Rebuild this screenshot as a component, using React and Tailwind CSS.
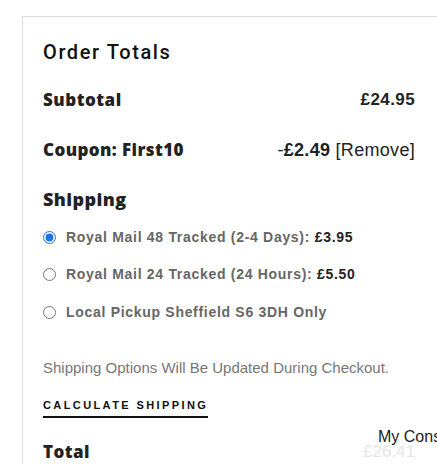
import React from 'react'

const options = [
  { label: 'Royal Mail 48 Tracked (2-4 Days):', price: '£3.95', checked: true },
  { label: 'Royal Mail 24 Tracked (24 Hours):', price: '£5.50' },
  { label: 'Local Pickup Sheffield S6 3DH Only' },
]

const heading = { fontFamily: '"Open Sans", Lato, sans-serif' }

const App = () => {
  return (
    <div className="relative bg-white h-[472px] pt-4 pl-[22px] overflow-hidden" style={{ fontFamily: '"Liberation Sans", Arial, sans-serif' }}>
      <div className="border-l border-t border-[#dcdcdc] pl-5 pr-[22px] pt-[23px]">
        <h2 className="text-[20px] leading-6 font-medium tracking-[1.6px] text-[#111]" style={{ fontFamily: 'Roboto, sans-serif' }}>
          Order Totals
        </h2>

        <div className="flex justify-between items-center h-6 mt-6">
          <span className="text-[17px] font-extrabold tracking-[0.5px] text-[#222]" style={heading}>Subtotal</span>
          <span className="text-[17px] font-bold tracking-[0.4px] text-[#222]">£24.95</span>
        </div>

        <div className="flex justify-between items-center h-6 mt-[26px]">
          <span className="text-[17px] font-extrabold tracking-[0.4px] text-[#222]" style={heading}>Coupon: First10</span>
          <span className="text-[18px] tracking-[0.3px] text-[#222]">
            -<b>£2.49</b> [Remove]
          </span>
        </div>

        <div className="mt-[25px] h-6 leading-6 text-[18px] font-extrabold tracking-[0.4px] text-[#222]" style={heading}>Shipping</div>

        <div className="flex flex-col gap-[17.5px] mt-4">
          {options.map((o, i) => (
            <label key={i} className="flex items-center h-5 gap-[10px] text-[14px] font-bold text-[#666] tracking-[0.7px]">
              <input type="radio" name="ship" defaultChecked={o.checked} className="w-[13px] h-[13px] m-0 accent-[#1a73e8]" />
              <span>
                {o.label} {o.price && <span className="text-[#222]">{o.price}</span>}
              </span>
            </label>
          ))}
        </div>

        <p className="mt-9 h-5 leading-5 text-[15px] text-[#777]">Shipping Options Will Be Updated During Checkout.</p>

        <div className="mt-5 inline-block border-b-2 border-[#111] pb-1 leading-[14px] text-[11px] font-bold tracking-[2.4px] text-[#111]">
          CALCULATE SHIPPING
        </div>

        <div className="flex justify-between items-center h-6 mt-[22px]">
          <span className="text-[17px] font-extrabold tracking-[0.4px] text-[#222]" style={heading}>Total</span>
          <span className="text-[17px] text-[#e6e6e6]">£26.41</span>
        </div>
      </div>

      <div className="absolute left-[378px] top-[427px] text-[16px] leading-5 text-[#222] whitespace-nowrap">My Consent</div>
    </div>
  )
}

export default App
